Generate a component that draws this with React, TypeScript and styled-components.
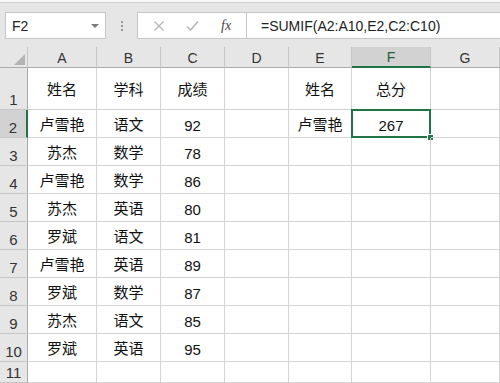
import React from 'react';
import styled, { createGlobalStyle } from 'styled-components';

const GlobalStyle = createGlobalStyle`
  html, body {
    margin: 0;
    padding: 0;
    background: #ffffff;
  }
  body {
    font-family: "Liberation Sans", Arial, "Noto Sans CJK SC", sans-serif;
  }
`;

const Window = styled.div`
  width: 500px;
  height: 383px;
  overflow: hidden;
  display: flex;
  flex-direction: column;
  background: #e6e6e6;
`;

const TopEdge = styled.div`
  height: 2px;
  background: #f7f7f7;
  border-bottom: 1px solid #d0d0d0;
`;

const FormulaBar = styled.div`
  display: flex;
  align-items: center;
  height: 27px;
  padding: 9px 0 8px 5px;
`;

const NameBox = styled.div`
  width: 101px;
  height: 27px;
  box-sizing: border-box;
  background: #fff;
  border: 1px solid #c6c6c6;
  display: flex;
  align-items: center;
  justify-content: space-between;
  padding: 0 6px 0 6px;
  font-size: 14px;
  color: #222;
`;

const DropArrow = styled.span`
  width: 0;
  height: 0;
  border-left: 4px solid transparent;
  border-right: 4px solid transparent;
  border-top: 4px solid #7a7a7a;
`;

const Grip = styled.div`
  width: 31px;
  display: flex;
  flex-direction: column;
  align-items: center;
  gap: 2px;
  span {
    width: 2px;
    height: 2px;
    background: #9a9a9a;
  }
`;

const ButtonGroup = styled.div`
  width: 110px;
  height: 27px;
  box-sizing: border-box;
  background: #fff;
  border: 1px solid #c6c6c6;
  display: flex;
  align-items: center;
  justify-content: space-around;
  padding: 0 4px;
`;

const Fx = styled.span`
  font-family: "Liberation Serif", "Times New Roman", serif;
  font-style: italic;
  font-size: 14px;
  color: #444;
`;

const FormulaInput = styled.div`
  flex: 1;
  height: 27px;
  box-sizing: border-box;
  background: #fff;
  border: 1px solid #c6c6c6;
  border-left: none;
  border-right: none;
  display: flex;
  align-items: center;
  padding-left: 14px;
  font-size: 14px;
  color: #222;
`;

const Sheet = styled.div`
  flex: 1;
  display: grid;
  grid-template-columns: 28px 69px 64px 64px 64px 63px 79px 1fr;
  grid-template-rows: 21px 42px repeat(9, 28px) 1fr;
  background: #fff;
  font-family: "Liberation Sans", Arial, "Noto Sans CJK SC", sans-serif;
`;

const Corner = styled.div`
  background: #e6e6e6;
  border-right: 1px solid #c6c6c6;
  border-bottom: 1px solid #ababab;
  display: flex;
  align-items: flex-end;
  justify-content: flex-end;
  padding: 0 2px 2px 0;
`;

const CornerTriangle = styled.span`
  width: 0;
  height: 0;
  border-left: 11px solid transparent;
  border-bottom: 11px solid #b4b4b4;
`;

const ColHead = styled.div<{ $active?: boolean }>`
  background: ${(p) => (p.$active ? '#d2d2d2' : '#e6e6e6')};
  border-right: 1px solid #c6c6c6;
  border-bottom: ${(p) => (p.$active ? '2px solid #217346' : '1px solid #ababab')};
  display: flex;
  align-items: center;
  justify-content: center;
  font-size: 14px;
  color: ${(p) => (p.$active ? '#1e5c3a' : '#333')};
  padding-top: 1px;
`;

const RowHead = styled.div<{ $active?: boolean }>`
  background: ${(p) => (p.$active ? '#d2d2d2' : '#e6e6e6')};
  border-right: ${(p) => (p.$active ? '2px solid #217346' : '1px solid #ababab')};
  border-bottom: 1px solid #c6c6c6;
  display: flex;
  align-items: flex-end;
  justify-content: center;
  padding-bottom: 1px;
  font-size: 15px;
  color: #333;
`;

const Cell = styled.div<{ $middle?: boolean; $selected?: boolean }>`
  position: relative;
  border-right: 1px solid #d4d4d4;
  border-bottom: 1px solid #d4d4d4;
  display: flex;
  align-items: ${(p) => (p.$middle ? 'center' : 'flex-end')};
  justify-content: center;
  padding-bottom: ${(p) => (p.$middle ? '0' : '3px')};
  font-size: 15px;
  color: #111;
  ${(p) =>
    p.$selected &&
    `
    &::before {
      content: '';
      position: absolute;
      left: -1px;
      top: -1px;
      right: -1px;
      bottom: -1px;
      border: 2px solid #217346;
    }
    &::after {
      content: '';
      position: absolute;
      right: -4px;
      bottom: -4px;
      width: 5px;
      height: 5px;
      background: #217346;
      border: 1px solid #fff;
    }
  `}
`;

const cols = ['A', 'B', 'C', 'D', 'E', 'F', 'G'];

const data: string[][] = [
  ['姓名', '学科', '成绩', '', '姓名', '总分', ''],
  ['卢雪艳', '语文', '92', '', '卢雪艳', '267', ''],
  ['苏杰', '数学', '78', '', '', '', ''],
  ['卢雪艳', '数学', '86', '', '', '', ''],
  ['苏杰', '英语', '80', '', '', '', ''],
  ['罗斌', '语文', '81', '', '', '', ''],
  ['卢雪艳', '英语', '89', '', '', '', ''],
  ['罗斌', '数学', '87', '', '', '', ''],
  ['苏杰', '语文', '85', '', '', '', ''],
  ['罗斌', '英语', '95', '', '', '', ''],
  ['', '', '', '', '', '', ''],
];

export default function App() {
  return (
    <>
      <GlobalStyle />
      <Window>
        <TopEdge />
        <FormulaBar>
          <NameBox>
            F2
            <DropArrow />
          </NameBox>
          <Grip>
            <span />
            <span />
            <span />
          </Grip>
          <ButtonGroup>
            <svg width="12" height="12" viewBox="0 0 12 12">
              <path d="M1.5 1.5 L10.5 10.5 M10.5 1.5 L1.5 10.5" stroke="#b8b8b8" strokeWidth="1.4" fill="none" />
            </svg>
            <svg width="13" height="12" viewBox="0 0 13 12">
              <path d="M1 6.5 L4.5 10 L12 1.5" stroke="#b8b8b8" strokeWidth="1.6" fill="none" />
            </svg>
            <Fx>fx</Fx>
          </ButtonGroup>
          <FormulaInput>=SUMIF(A2:A10,E2,C2:C10)</FormulaInput>
        </FormulaBar>
        <Sheet>
          <Corner>
            <CornerTriangle />
          </Corner>
          {cols.map((c) => (
            <ColHead key={c} $active={c === 'F'}>
              {c}
            </ColHead>
          ))}
          {data.map((row, r) => (
            <React.Fragment key={r}>
              <RowHead $active={r === 1}>{r + 1}</RowHead>
              {row.map((v, c) => (
                <Cell key={c} $middle={r === 0} $selected={r === 1 && c === 5}>
                  {v}
                </Cell>
              ))}
            </React.Fragment>
          ))}
        </Sheet>
      </Window>
    </>
  );
}
